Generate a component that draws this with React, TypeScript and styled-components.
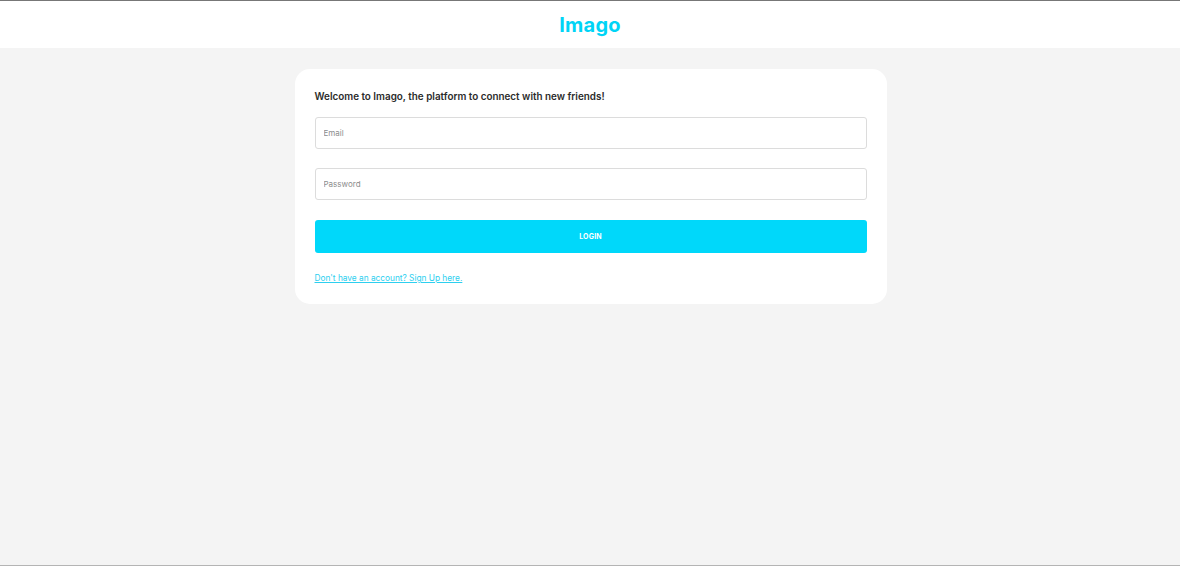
import React from 'react';
import styled, { createGlobalStyle } from 'styled-components';

const GlobalStyle = createGlobalStyle`
  html, body {
    margin: 0;
    padding: 0;
    background: #f4f4f4;
  }
  * {
    box-sizing: border-box;
  }
`;

const Page = styled.div`
  min-height: 100vh;
  display: flex;
  flex-direction: column;
  background: #f4f4f4;
  border-top: 1px solid #777777;
  border-bottom: 1px solid #b4b4b4;
  font-family: Inter, 'Noto Sans', 'Liberation Sans', sans-serif;
`;

const Header = styled.header`
  height: 47px;
  background: #ffffff;
  display: flex;
  align-items: center;
  justify-content: center;
`;

const Logo = styled.h1`
  margin: 0;
  font-size: 20px;
  font-weight: 700;
  color: #00d4f6;
  letter-spacing: 0.2px;
`;

const Main = styled.main`
  flex: 1;
  display: flex;
  justify-content: center;
  padding-top: 21px;
  padding-left: 1px;
`;

const Card = styled.section`
  width: 592px;
  background: #ffffff;
  border-radius: 15px;
  padding: 20px;
  display: flex;
  flex-direction: column;
  align-self: flex-start;
`;

const Title = styled.h2`
  margin: 0 0 14px;
  font-size: 9.9px;
  line-height: 14px;
  font-weight: 600;
  color: #2b2b2b;
`;

const Input = styled.input<{ $gap: number }>`
  display: block;
  width: 100%;
  height: 32px;
  margin-bottom: ${props => props.$gap}px;
  padding: 0 8px;
  border: 1px solid #dcdcdc;
  border-radius: 3px;
  font-family: inherit;
  font-size: 8px;
  color: #333;
  outline: none;

  &::placeholder {
    color: #8c8c8c;
  }
`;

const Button = styled.button`
  width: 100%;
  height: 33px;
  margin-bottom: 19px;
  border: none;
  border-radius: 3px;
  background: #00d8fa;
  color: #ffffff;
  font-family: inherit;
  font-size: 7px;
  font-weight: 700;
  letter-spacing: 0.2px;
  cursor: pointer;
`;

const SignUpLink = styled.a`
  align-self: flex-start;
  font-size: 8.3px;
  line-height: 12px;
  color: #2dcfef;
  text-decoration: underline;
`;

export default function App() {
  return (
    <>
      <GlobalStyle />
      <Page>
        <Header>
          <Logo>Imago</Logo>
        </Header>
        <Main>
          <Card>
            <Title>Welcome to Imago, the platform to connect with new friends!</Title>
            <Input $gap={19} type="email" placeholder="Email" />
            <Input $gap={20} type="password" placeholder="Password" />
            <Button type="button">LOGIN</Button>
            <SignUpLink href="#">Don't have an account? Sign Up here.</SignUpLink>
          </Card>
        </Main>
      </Page>
    </>
  );
}
